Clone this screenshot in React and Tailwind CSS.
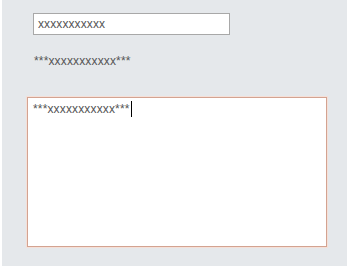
export default function App() {
  return (
    <div className="bg-white w-[347px] h-[267px] font-['Liberation_Sans',Arial,sans-serif]">
      <div className="ml-[2px] h-[266px] bg-[#e5e8eb] pt-[13px]">
        {/* Text input */}
        <div className="ml-[31px] w-[197px] h-[22px] bg-white border border-[#a8a8a8] flex items-center pl-[4px] text-[12px] tracking-[0.1px] text-[#555]">
          xxxxxxxxxxx
        </div>

        {/* Preview line */}
        <p className="ml-[32px] mt-[19px] text-[12px] leading-[14px] tracking-[0.15px] text-[#555]">***xxxxxxxxxxx***</p>

        {/* Focused text area */}
        <div className="ml-[25px] mt-[29px] w-[300px] h-[150px] bg-white border border-[#d3a391] shadow-[0_0_0_1px_#f5e0d8] px-[5px] pt-[3px] text-[12px] leading-[16px] tracking-[0.15px] text-[#555]">
          <span>***xxxxxxxxxxx***</span>
          <span className="inline-block align-top w-px h-[16px] bg-black ml-px" />
        </div>
      </div>
    </div>
  )
}
